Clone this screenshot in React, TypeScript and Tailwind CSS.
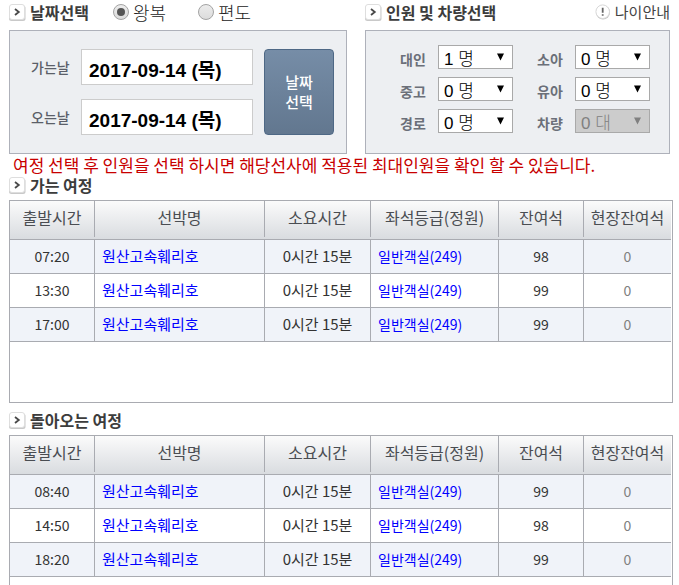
import { useState } from 'react';
import type { ReactNode } from 'react';

interface Trip {
  time: string;
  vessel: string;
  duration: string;
  seat: string;
  remaining: number;
  onSite: number;
}

const outboundTrips: Trip[] = [
  { time: '07:20', vessel: '원산고속훼리호', duration: '0시간 15분', seat: '일반객실(249)', remaining: 98, onSite: 0 },
  { time: '13:30', vessel: '원산고속훼리호', duration: '0시간 15분', seat: '일반객실(249)', remaining: 99, onSite: 0 },
  { time: '17:00', vessel: '원산고속훼리호', duration: '0시간 15분', seat: '일반객실(249)', remaining: 99, onSite: 0 },
];

const returnTrips: Trip[] = [
  { time: '08:40', vessel: '원산고속훼리호', duration: '0시간 15분', seat: '일반객실(249)', remaining: 99, onSite: 0 },
  { time: '14:50', vessel: '원산고속훼리호', duration: '0시간 15분', seat: '일반객실(249)', remaining: 98, onSite: 0 },
  { time: '18:20', vessel: '원산고속훼리호', duration: '0시간 15분', seat: '일반객실(249)', remaining: 99, onSite: 0 },
];

const passengerFields = [
  { id: 'adult', label: '대인', unit: '명', initial: 1 },
  { id: 'child', label: '소아', unit: '명', initial: 0 },
  { id: 'student', label: '중고', unit: '명', initial: 0 },
  { id: 'infant', label: '유아', unit: '명', initial: 0 },
  { id: 'senior', label: '경로', unit: '명', initial: 0 },
  { id: 'vehicle', label: '차량', unit: '대', initial: 0, disabled: true },
];

const columns = ['출발시간', '선박명', '소요시간', '좌석등급(정원)', '잔여석', '현장잔여석'];

function ArrowIcon() {
  return (
    <svg className="size-[17px] shrink-0" viewBox="0 0 17 17" fill="none" aria-hidden="true">
      <rect x="0" y="1.5" width="16.5" height="15.5" rx="2.5" fill="#c9c9c9" />
      <rect x="0.5" y="0.5" width="15" height="15" rx="2.5" fill="#fff" stroke="#dedede" />
      <path d="M6 5l3.8 3L6 11" stroke="#484848" strokeWidth="1.8" />
    </svg>
  );
}

function Heading({ children }: { children: ReactNode }) {
  return (
    <h2 className="flex h-5 items-center gap-1 text-[16px] leading-5 font-bold whitespace-nowrap text-[#3c3c3c]">
      <ArrowIcon />
      {children}
    </h2>
  );
}

function TripTypeRadio({ label, defaultChecked }: { label: string; defaultChecked?: boolean }) {
  return (
    <label className="flex h-5 items-center gap-1 text-[18px] leading-5 font-light text-[#222]">
      <input
        type="radio"
        name="tripType"
        defaultChecked={defaultChecked}
        className="flex size-4 appearance-none items-center justify-center rounded-full border border-[#a3a3a3] bg-linear-to-b from-[#ececec] to-[#dcdcdc] checked:before:size-2 checked:before:rounded-full checked:before:bg-[#555] checked:before:content-['']"
      />
      {label}
    </label>
  );
}

function DateField({ id, label }: { id: string; label: string }) {
  return (
    <div className="flex items-center gap-[11px]">
      <label htmlFor={id} className="w-[39px] shrink-0 text-[14px] font-medium whitespace-nowrap text-[#5b5f69]">
        {label}
      </label>
      <input
        id={id}
        type="text"
        readOnly
        value="2017-09-14 (목)"
        className="h-9 w-full min-w-0 border border-[#ccc] bg-white px-[7px] pt-0.5 font-['Liberation_Sans','Noto_Sans_CJK_KR',sans-serif] text-[19px] leading-6 font-bold text-black"
      />
    </div>
  );
}

function CountSelect({ id, label, unit, initial, disabled }: (typeof passengerFields)[number]) {
  const [count, setCount] = useState(initial);
  return (
    <div className="flex h-6 items-center gap-3">
      <label htmlFor={id} className="w-[26px] pt-1 text-[14px] leading-5 font-bold whitespace-nowrap text-[#6b6f79]">
        {label}
      </label>
      <div className="relative flex">
        <select
          id={id}
          value={count}
          disabled={disabled}
          onChange={(e) => setCount(Number(e.target.value))}
          className="h-6 w-[75px] appearance-none border border-[#a9a9a9] bg-white pt-1 pl-[5px] font-['Liberation_Sans','Noto_Sans_CJK_KR',sans-serif] text-[17px] leading-5 font-light text-black disabled:bg-[#ccc] disabled:text-[#808080] disabled:opacity-100"
        >
          {[0, 1, 2, 3, 4, 5].map((n) => (
            <option key={n} value={n}>
              {n} {unit}
            </option>
          ))}
        </select>
        <svg className="pointer-events-none absolute top-2 right-2 h-2 w-[9px]" viewBox="0 0 9 8" aria-hidden="true">
          <path d="M1 0.5h7L4.5 7.5z" fill={disabled ? '#808080' : '#000'} />
        </svg>
      </div>
    </div>
  );
}

function TripTable({ trips }: { trips: Trip[] }) {
  const cell = 'h-[34px] border-b border-[#a9abb1] p-0 pb-0.5';
  const divided = `${cell} border-r`;

  return (
    <div className="min-h-[203px] border border-[#a9abb1] pr-px">
      <table className="w-full table-fixed border-separate border-spacing-0 whitespace-nowrap">
        <colgroup>
          <col className="w-[85px]" />
          <col />
          <col className="w-[106px]" />
          <col className="w-[128px]" />
          <col className="w-[85px]" />
          <col className="w-[87px]" />
        </colgroup>
        <thead>
          <tr className="bg-linear-to-b from-[#fbfbfb] to-[#d8dbdf]">
            {columns.map((name) => (
              <th key={name} scope="col" className="group border-b border-[#a9abb1] p-0 pb-0.5">
                <div className="h-9 border-r border-[#a9abb1] text-[16px] leading-[33px] font-normal text-[#4a4d52] group-last:border-r-0">
                  {name}
                </div>
              </th>
            ))}
          </tr>
        </thead>
        <tbody className="text-center text-[14px] leading-5 text-[#333]">
          {trips.map((trip) => (
            <tr key={trip.time} className="odd:bg-[#f0f3f9]">
              <td className={divided}>{trip.time}</td>
              <td className={`${divided} pl-[7px] text-left text-[15px]`}>
                <a href="#" className="text-[#0000ff]">{trip.vessel}</a>
              </td>
              <td className={`${divided} text-[15px]`}>{trip.duration}</td>
              <td className={`${divided} pl-[7px] text-left`}>
                <a href="#" className="text-[#0000ff]">{trip.seat}</a>
              </td>
              <td className={divided}>{trip.remaining}</td>
              <td className={`${cell} text-[#808080]`}>{trip.onSite}</td>
            </tr>
          ))}
        </tbody>
      </table>
    </div>
  );
}

export default function App() {
  return (
    <main className="h-screen overflow-hidden bg-white pr-[6px] pl-[9px] font-['Noto_Sans_CJK_KR',sans-serif]">
      <div className="flex gap-[18px] pr-[3px]">
        {/* Dates */}
        <section className="flex-[338]">
          <div className="flex h-[30px] items-start gap-6 pt-[2px]">
            <Heading>날짜선택</Heading>
            <div className="flex gap-8">
              <TripTypeRadio label="왕복" defaultChecked />
              <TripTypeRadio label="편도" />
            </div>
          </div>
          <div className="flex h-[124px] gap-[11px] border border-[#aeb1ba] bg-[#edeff2] py-[18px] pr-3 pl-[21px]">
            <div className="flex min-w-0 flex-1 flex-col gap-3.5">
              <DateField id="depart" label="가는날" />
              <DateField id="return" label="오는날" />
            </div>
            <button
              type="button"
              className="h-[86px] w-[70px] shrink-0 rounded border border-[#4e6885] bg-linear-to-b from-[#768da7] to-[#62778f] text-[15px] leading-5 font-medium text-white"
            >
              날짜
              <br />
              선택
            </button>
          </div>
        </section>

        {/* Passengers and vehicle */}
        <section className="flex-[305]">
          <div className="flex h-[30px] items-start justify-between pt-[2px]">
            <Heading>인원 및 차량선택</Heading>
            <a href="#" className="flex h-5 items-center gap-1 text-[15px] whitespace-nowrap text-[#444]">
              <svg className="size-4" viewBox="0 0 16 16" fill="none" aria-hidden="true">
                <circle cx="8" cy="8.5" r="7" fill="#c4c4c4" />
                <circle cx="7.7" cy="7.7" r="6.8" fill="#fff" stroke="#d8d8d8" />
                <path d="M7.7 3.8v5M7.7 10.2v1.6" stroke="#666" strokeWidth="1.8" />
              </svg>
              나이안내
            </a>
          </div>
          <div className="h-[124px] border border-[#aeb1ba] bg-[#edeff2] pt-[14px] pl-[34px]">
            <div className="grid w-max grid-cols-2 gap-x-6 gap-y-2">
              {passengerFields.map((field) => (
                <CountSelect key={field.id} {...field} />
              ))}
            </div>
          </div>
        </section>
      </div>

      <p className="pl-1 text-[17px] leading-[21px] whitespace-nowrap text-[#c80000]">
        여정 선택 후 인원을 선택 하시면 해당선사에 적용된 최대인원을 확인 할 수 있습니다.
      </p>

      <section className="flex flex-col gap-[5px]">
        <Heading>가는 여정</Heading>
        <TripTable trips={outboundTrips} />
      </section>

      <section className="mt-[7px] flex flex-col gap-[5px]">
        <Heading>돌아오는 여정</Heading>
        <TripTable trips={returnTrips} />
      </section>
    </main>
  );
}
